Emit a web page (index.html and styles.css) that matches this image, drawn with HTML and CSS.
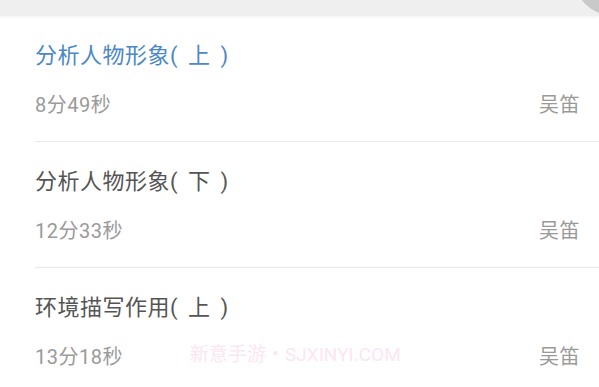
FILE: index.html
```html
<!DOCTYPE html>
<html lang="zh-CN">
<head>
    <meta charset="UTF-8">
    <meta name="viewport" content="width=device-width, initial-scale=1.0">
    <title>课程列表</title>
    <link rel="stylesheet" href="styles.css">
</head>
<body>
    <div class="top-bar">
        <div class="top-knob"></div>
    </div>
    <ul class="lesson-list">
        <li class="lesson lesson-active">
            <div class="lesson-title">分析人物形象( 上 )</div>
            <div class="lesson-meta">
                <span class="lesson-time">8分49秒</span>
                <span class="lesson-author">吴笛</span>
            </div>
        </li>
        <li class="lesson">
            <div class="lesson-title">分析人物形象( 下 )</div>
            <div class="lesson-meta">
                <span class="lesson-time">12分33秒</span>
                <span class="lesson-author">吴笛</span>
            </div>
        </li>
        <li class="lesson">
            <div class="lesson-title">环境描写作用( 上 )</div>
            <div class="lesson-meta">
                <span class="lesson-time">13分18秒</span>
                <span class="lesson-author">吴笛</span>
            </div>
        </li>
    </ul>
    <div class="watermark">新意手游・SJXINYI.COM</div>
</body>
</html>
```

FILE: styles.css
```css
:root {
    --color-blue: #4b88c6;
    --color-title: #555555;
    --color-meta: #9a9a9a;
    --color-line: #e9e9e9;
    --font-family: Roboto, "Noto Sans CJK SC", sans-serif;
}

html, body {
    margin: 0;
    padding: 0;
    background: #fff;
    font-family: var(--font-family);
    overflow: hidden;
    height: 387px;
}

.top-bar {
    position: relative;
    height: 16px;
    background: #efefef;
    box-shadow: 0 1px 3px rgba(0, 0, 0, 0.06);
    overflow: hidden;
}

.top-knob {
    position: absolute;
    top: -60px;
    right: -52px;
    width: 76px;
    height: 76px;
    border-radius: 50%;
    background: #c9c9c9;
}

.lesson-list {
    list-style: none;
    margin: 0;
    padding: 0 0 0 35px;
}

.lesson {
    height: 125px;
    border-bottom: 1px solid var(--color-line);
    padding-right: 19px;
    box-sizing: content-box;
}

.lesson-title {
    padding-top: 25px;
    font-size: 22px;
    line-height: 30px;
    letter-spacing: 0.5px;
    word-spacing: 4px;
    color: var(--color-title);
}

.lesson-active .lesson-title {
    color: var(--color-blue);
}

.lesson-meta {
    display: flex;
    justify-content: space-between;
    margin-top: 20px;
    font-size: 20px;
    line-height: 28px;
    letter-spacing: 0.5px;
    color: var(--color-meta);
}

.watermark {
    position: absolute;
    top: 342px;
    left: 190px;
    font-size: 19px;
    line-height: 26px;
    color: #fbe6f2;
    pointer-events: none;
}
```
